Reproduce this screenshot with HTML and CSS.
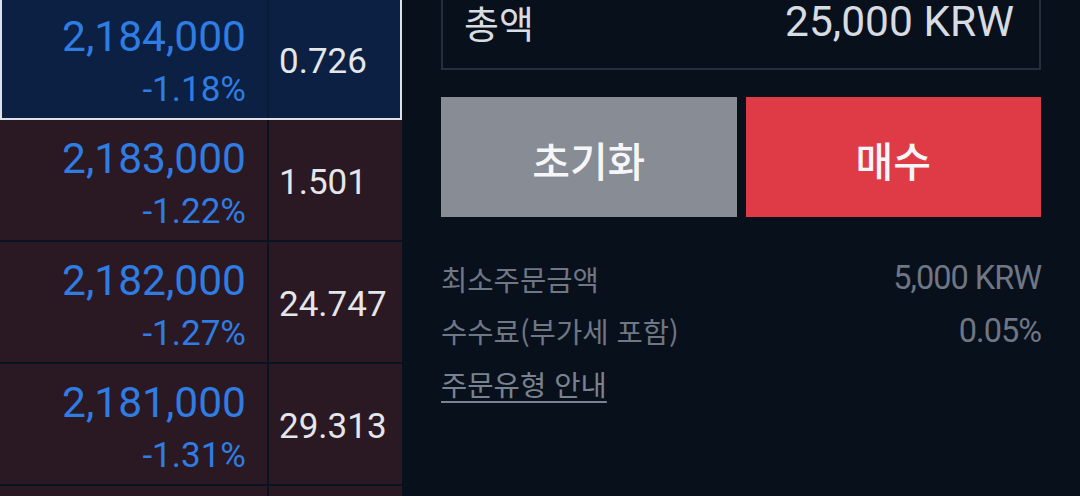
FILE: index.html
```html
<!DOCTYPE html>
<html lang="ko">
<head>
<meta charset="utf-8">
<title>주문</title>
<link rel="stylesheet" href="styles.css">
</head>
<body>
<div class="screen">
  <div class="book">
    <div class="row row-current">
      <div class="price-cell"><span class="price">2,184,000</span><span class="change">-1.18%</span></div>
      <div class="vol-cell">0.726</div>
    </div>
    <div class="row">
      <div class="price-cell"><span class="price">2,183,000</span><span class="change">-1.22%</span></div>
      <div class="vol-cell">1.501</div>
    </div>
    <div class="row">
      <div class="price-cell"><span class="price">2,182,000</span><span class="change">-1.27%</span></div>
      <div class="vol-cell">24.747</div>
    </div>
    <div class="row">
      <div class="price-cell"><span class="price">2,181,000</span><span class="change">-1.31%</span></div>
      <div class="vol-cell">29.313</div>
    </div>
    <div class="row">
      <div class="price-cell"></div>
      <div class="vol-cell"></div>
    </div>
  </div>
  <div class="panel">
    <div class="total-box">
      <span class="total-label">총액</span>
      <span class="total-value">25,000 KRW</span>
    </div>
    <div class="buttons">
      <button class="btn btn-reset">초기화</button>
      <button class="btn btn-buy">매수</button>
    </div>
    <div class="info">
      <div class="info-row"><span class="info-label">최소주문금액</span><span class="info-value">5,000 KRW</span></div>
      <div class="info-row"><span class="info-label">수수료(부가세 포함)</span><span class="info-value">0.05%</span></div>
      <div class="info-row"><a class="info-link" href="#">주문유형 안내</a></div>
    </div>
  </div>
</div>
</body>
</html>
```
FILE: styles.css
```css
html, body {
  margin: 0;
  padding: 0;
  background: #08101c;
  overflow: hidden;
}
body {
  width: 1080px;
  height: 496px;
  font-family: Roboto, "Noto Sans CJK KR", sans-serif;
}
.screen {
  display: flex;
  gap: 39px;
  height: 496px;
  overflow: hidden;
}
.book {
  width: 402px;
  flex: none;
  display: flex;
  flex-direction: column;
  gap: 2px;
  margin-top: -2px;
  background: #0a1322;
}
.row {
  display: flex;
  gap: 2px;
  height: 120px;
  flex: none;
}
.row-current {
  height: 122px;
  margin-bottom: -2px;
  outline: 2px solid #dde2e9;
  outline-offset: -2px;
  background: #091a36;
}
.price-cell {
  width: 267px;
  flex: none;
  box-sizing: border-box;
  background: #2a1823;
  display: flex;
  flex-direction: column;
  align-items: flex-end;
  padding: 14px 21px 0 0;
}
.vol-cell {
  flex: 1;
  background: #2a1823;
  display: flex;
  align-items: center;
  padding: 4px 0 0 10px;
  font-size: 35px;
  color: #e4e6ea;
}
.row-current .price-cell,
.row-current .vol-cell {
  background: #0b2042;
}
.price {
  font-size: 42.5px;
  line-height: 50px;
  color: #2f7de3;
}
.change {
  font-size: 35px;
  line-height: 40px;
  margin-top: 8px;
  color: #2f7de3;
}
.panel {
  width: 600px;
  flex: none;
  display: flex;
  flex-direction: column;
}
.total-box {
  height: 92px;
  margin-top: -22px;
  box-sizing: border-box;
  border: 2px solid #252e3b;
  display: flex;
  align-items: center;
  justify-content: space-between;
  padding: 0 25px 4px 21px;
}
.total-label {
  font-size: 38px;
  line-height: 1;
  color: #d9dce2;
  font-family: "Noto Sans CJK KR", sans-serif;
}
.total-value {
  font-size: 42.5px;
  line-height: 1;
  color: #d7dbe2;
}
.buttons {
  display: flex;
  gap: 9px;
  margin-top: 27px;
}
.btn {
  flex: 1;
  height: 120px;
  border: none;
  border-radius: 0;
  font-family: "Noto Sans CJK KR", sans-serif;
  font-size: 41px;
  font-weight: 500;
  color: #f6f6f8;
  padding: 4px 0 0;
}
.btn-reset {
  background: #878c95;
}
.btn-buy {
  background: #df3b46;
}
.info {
  margin-top: 35px;
  display: flex;
  flex-direction: column;
}
.info-row {
  display: flex;
  justify-content: space-between;
  align-items: center;
  height: 52.5px;
}
.info-label {
  font-family: "Noto Sans CJK KR", sans-serif;
  font-size: 28.6px;
  color: #6f7684;
}
.info-value {
  font-size: 32.5px;
  letter-spacing: -1px;
  color: #6f7684;
}
.info-link {
  font-family: "Noto Sans CJK KR", sans-serif;
  font-size: 28.6px;
  color: #7b828f;
  text-decoration: underline;
  text-underline-offset: 5px;
}
```
